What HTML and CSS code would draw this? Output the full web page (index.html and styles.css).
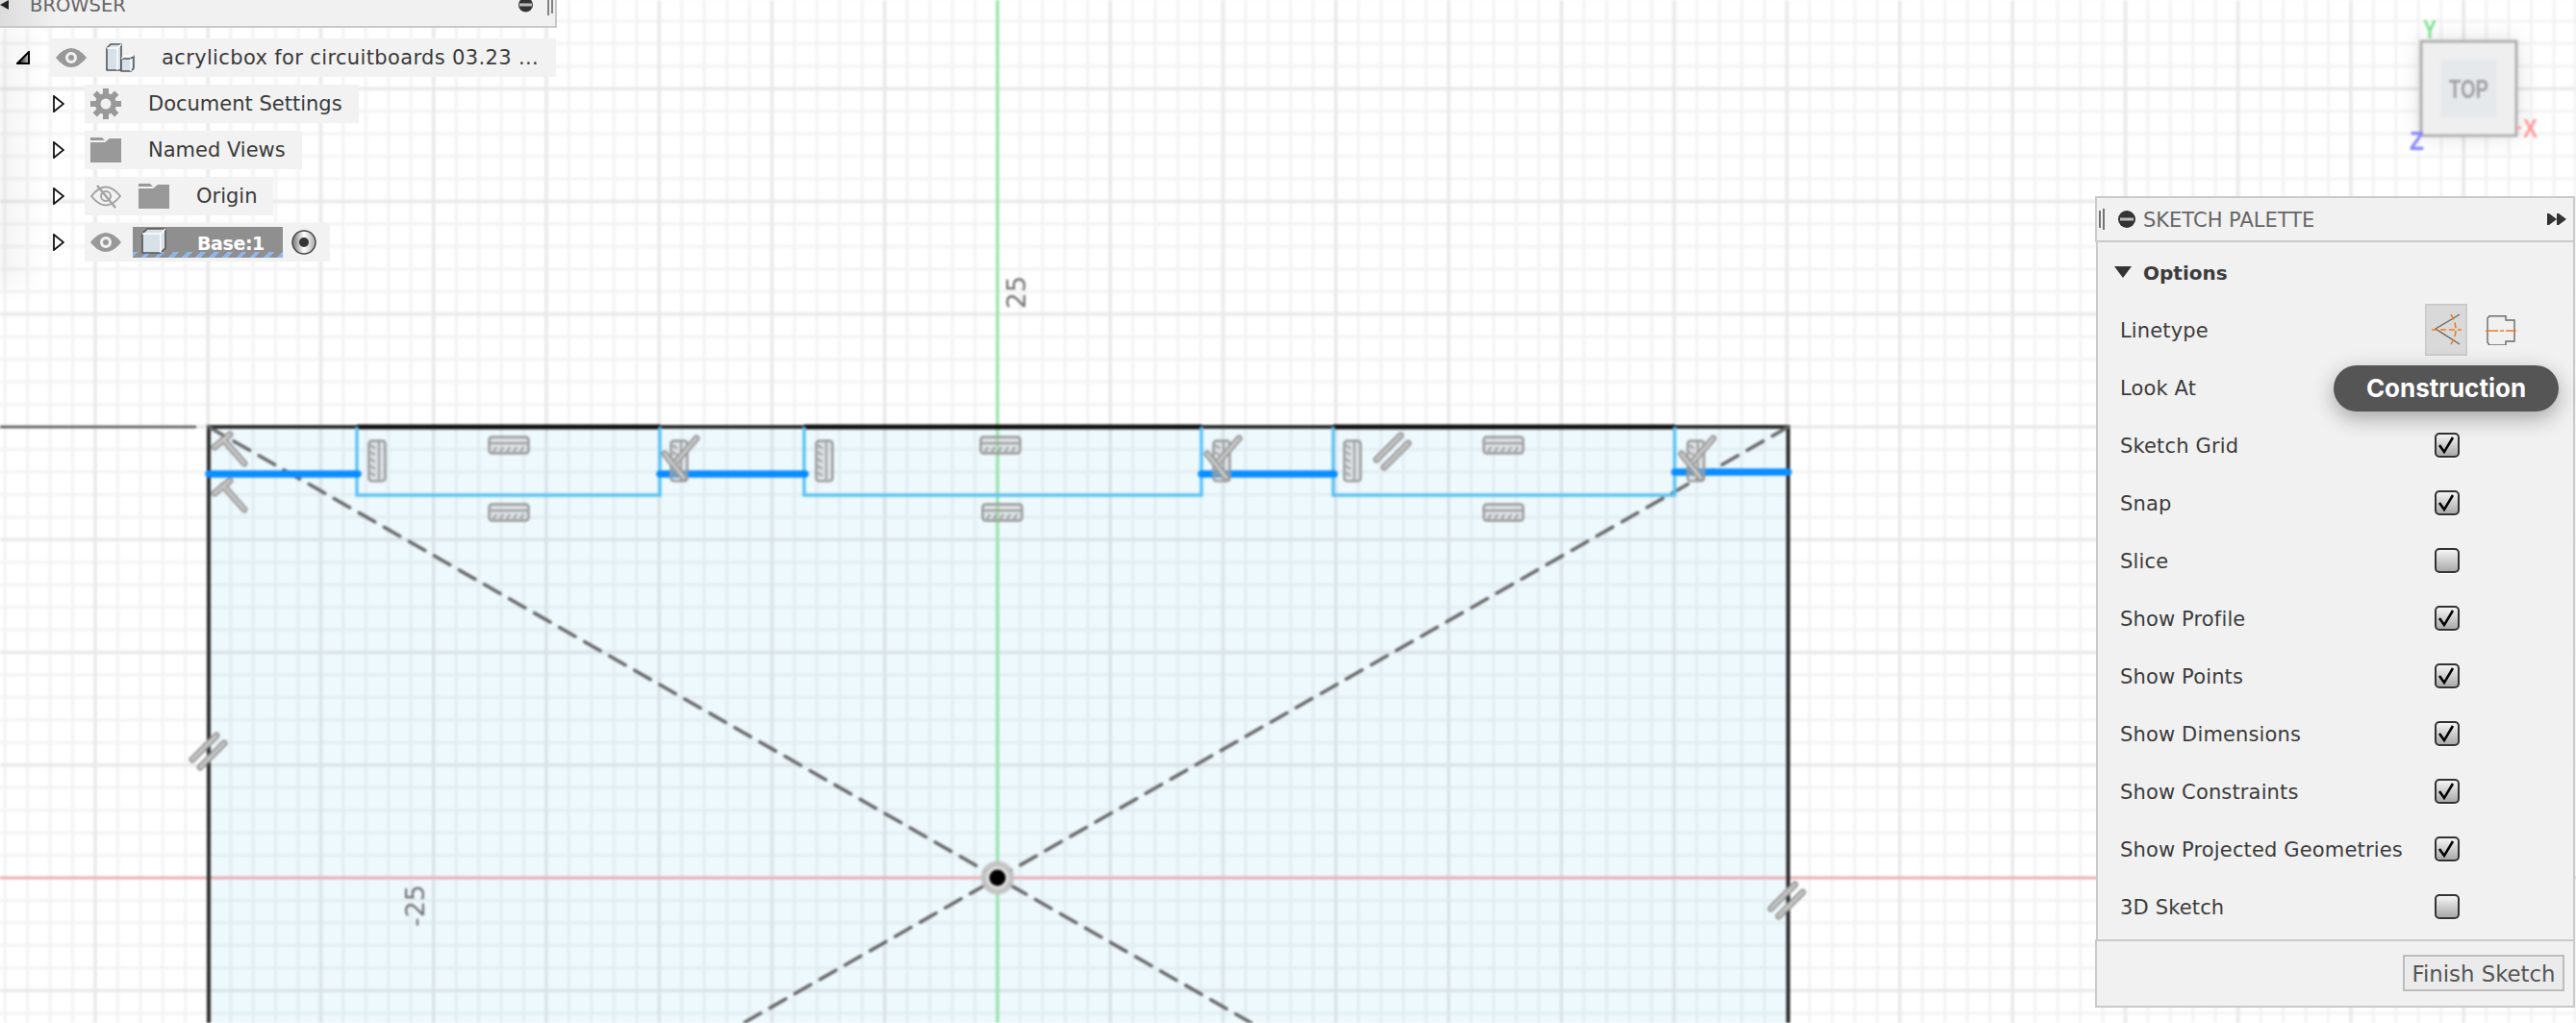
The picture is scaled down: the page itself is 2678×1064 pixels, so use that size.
FILE: index.html
```html
<!DOCTYPE html>
<html lang="en">
<head>
<meta charset="utf-8">
<title>Sketch</title>
<link rel="stylesheet" href="styles.css">
</head>
<body>
<svg class="canvas" width="2678" height="1064" viewBox="0 0 2678 1064">
  <defs>
    <pattern id="minor" patternUnits="userSpaceOnUse" x="1025.275" y="901.275" width="23.45" height="23.45">
      <path class="grid-minor" d="M11.725 0V23.45M0 11.725H23.45"/>
    </pattern>
    <pattern id="major" patternUnits="userSpaceOnUse" x="978.375" y="854.375" width="117.25" height="117.25">
      <path class="grid-major" d="M58.625 0V117.25M0 58.625H117.25"/>
    </pattern>
    <g id="hz">
      <rect class="glyph" x="1.5" y="1.5" width="41" height="17" rx="3"/>
      <path class="glyph-line" d="M2 8H42M6 17l3-5M13 17l3-5M20 17l3-5M27 17l3-5M34 17l3-5"/>
    </g>
    <g id="par">
      <path class="cap-o" d="M-17 8L8-17M-9 16L16-9"/>
      <path class="cap-i" d="M-17 8L8-17M-9 16L16-9"/>
    </g>
    <g id="perp">
      <path class="cap-o" d="M0 13L16 0M9 5L31 30"/>
      <path class="cap-i" d="M0 13L16 0M9 5L31 30"/>
    </g>
    <g id="vt"><use href="#hz" transform="translate(19 0) rotate(90) scale(1.02 1)"/></g>
    <g id="combo">
      <use href="#vt" x="8" y="4"/>
      <path class="cap-o" d="M2 19L22 44M14 27L35 3"/>
      <path class="cap-i" d="M2 19L22 44M14 27L35 3"/>
    </g>
    <radialGradient id="halo">
      <stop offset="0.5" stop-color="#e6e6e6"/>
      <stop offset="0.8" stop-color="#bcbcbc"/>
      <stop offset="1" stop-color="#c8c8c8" stop-opacity=".6"/>
    </radialGradient>
    <linearGradient id="leftfade">
      <stop offset="0" stop-color="#000" stop-opacity="0.06"/>
      <stop offset="1" stop-color="#000" stop-opacity="0"/>
    </linearGradient>
  </defs>

  <rect class="paper" width="2678" height="1064"/>
  <rect width="2678" height="1064" fill="url(#minor)"/>
  <rect width="2678" height="1064" fill="url(#major)"/>
  <rect class="left-fade" x="-20" y="28" width="70" height="270" fill="url(#leftfade)"/>
  <rect class="profile" x="217" y="444" width="1642" height="620"/>

  <line class="axis-y" x1="1037" y1="0" x2="1037" y2="1064"/>
  <line class="axis-x" x1="0" y1="913" x2="2678" y2="913"/>

  <line class="stub" x1="0" y1="444" x2="204" y2="444"/>
  <path class="edge" d="M217 1064V444H1859V1064"/>
  <path class="edge-dark" d="M371 444H686M836 444H1249M1386 444H1741"/>

  <path class="diag" d="M217 444L1301 1064"/>
  <path class="diag" d="M1859 444L773 1064"/>

  <path class="notch" d="M371 444V515H686V444"/>
  <path class="notch" d="M836 444V515H1249V444"/>
  <path class="notch" d="M1386 444V515H1741V444"/>
  <path class="slot" d="M217 493H372M686 493H837M1249 493H1387M1741 491H1859"/>

  <use href="#perp" x="223" y="452"/>
  <use href="#perp" x="223" y="500"/>
  <use href="#vt" x="383" y="457"/>
  <use href="#hz" x="507" y="453"/>
  <use href="#hz" x="507" y="523"/>
  <use href="#combo" x="689" y="453"/>
  <use href="#vt" x="848" y="457"/>
  <use href="#hz" x="1018" y="453"/>
  <use href="#hz" x="1020" y="523"/>
  <use href="#combo" x="1253" y="453"/>
  <use href="#vt" x="1397" y="457"/>
  <use href="#par" x="1448" y="470"/>
  <use href="#hz" x="1541" y="453"/>
  <use href="#hz" x="1541" y="523"/>
  <use href="#combo" x="1746" y="453"/>
  <use href="#par" x="217" y="782"/>
  <use href="#par" x="1858" y="937"/>

  <circle cx="1037" cy="913" r="18" fill="url(#halo)" class="halo"/>
  <circle class="origin" cx="1037" cy="913" r="8.5"/>

  <text class="dim" transform="translate(1066 304) rotate(-90)">25</text>
  <text class="dim" transform="translate(441 942) rotate(-90)">-25</text>

  <rect class="cube-shadow" x="2517" y="43" width="99" height="98"/>
  <rect class="cube" x="2517" y="43" width="99" height="98"/>
  <rect class="cube-face" x="2537" y="62" width="59" height="60"/>
  <text class="cube-text" x="2546" y="102" textLength="41" lengthAdjust="spacingAndGlyphs">TOP</text>
  <text class="axis-label ay" x="2519" y="40" textLength="14" lengthAdjust="spacingAndGlyphs">Y</text>
  <text class="axis-label az" x="2505" y="156" textLength="15" lengthAdjust="spacingAndGlyphs">Z</text>
  <text class="axis-label ax" x="2623" y="143" textLength="15" lengthAdjust="spacingAndGlyphs">X</text>
  <line class="axis-tick" x1="2616" y1="133" x2="2621" y2="133"/>
</svg>

<aside class="browser">
  <header class="browser-head">
    <svg class="head-arrow" width="9" height="10" viewBox="0 0 9 10"><path d="M9 0V10L0 5Z"/></svg>
    <span class="browser-title">BROWSER</span>
    <svg class="head-min" width="15" height="14" viewBox="0 0 15 14"><circle cx="7.5" cy="5" r="7.5"/><rect class="min-bar" x="1" y="3.5" width="13" height="3"/></svg>
    <svg class="head-grip" width="6" height="16" viewBox="0 0 6 16"><path d="M1 0V16M5 0V14"/></svg>
  </header>
  <div class="tree">
    <div class="tree-row">
      <svg class="twist-open" width="14" height="14" viewBox="0 0 14 14"><defs><linearGradient id="tg" x1="0" x2="1"><stop offset="0" stop-color="#000"/><stop offset="1" stop-color="#ccc"/></linearGradient></defs><path d="M13 1V13H1Z"/></svg>
      <div class="pill pill-root">
        <svg class="ic" width="32" height="20" viewBox="0 0 32 20"><path class="ic-fill" d="M0 10Q16-10 32 10Q16 30 0 10Z"/><circle class="ic-bg" cx="16" cy="10" r="6"/><circle class="ic-fill" cx="16" cy="10" r="3"/></svg>
        <svg class="ic ic-comp" width="30" height="30" viewBox="0 0 30 30"><path class="solid" d="M1 5L5 1H16V28H1Z"/><path class="solid" d="M16 16H26L29 13V26L26 29H16Z"/><path class="solid-line" d="M1 5H12L16 1M12 5V28M16 16L20 13H29M26 16V29"/></svg>
        <span class="tree-label root-label">acrylicbox for circuitboards 03.23 ...</span>
      </div>
    </div>
    <div class="tree-row">
      <svg class="twist" width="12" height="18" viewBox="0 0 12 18"><path d="M1 1L11 9L1 17Z"/></svg>
      <div class="pill">
        <svg class="ic" width="32" height="32" viewBox="0 0 32 32"><path class="gear-teeth" d="M16 0V32M0 16H32M4.7 4.7L27.3 27.3M27.3 4.7L4.7 27.3"/><circle class="ic-fill" cx="16" cy="16" r="11"/><circle class="ic-bg" cx="16" cy="16" r="5.5"/></svg>
        <span class="tree-label">Document Settings</span>
      </div>
    </div>
    <div class="tree-row">
      <svg class="twist" width="12" height="18" viewBox="0 0 12 18"><path d="M1 1L11 9L1 17Z"/></svg>
      <div class="pill">
        <svg class="ic" width="32" height="26" viewBox="0 0 32 26"><path class="ic-fill" d="M0 0H12L15 3H0ZM0 5H15L20 1H32V26H0Z"/></svg>
        <span class="tree-label">Named Views</span>
      </div>
    </div>
    <div class="tree-row">
      <svg class="twist" width="12" height="18" viewBox="0 0 12 18"><path d="M1 1L11 9L1 17Z"/></svg>
      <div class="pill pill-vis">
        <svg class="ic" width="32" height="26" viewBox="0 0 32 26"><path class="ic-line" d="M1 13Q16-6 31 13Q16 32 1 13Z"/><circle class="ic-line" cx="16" cy="13" r="5"/><path class="ic-slash" d="M7 2L26 25"/></svg>
        <svg class="ic" width="32" height="26" viewBox="0 0 32 26"><path class="ic-fill" d="M0 0H12L15 3H0ZM0 5H15L20 1H32V26H0Z"/></svg>
        <span class="tree-label">Origin</span>
      </div>
    </div>
    <div class="tree-row">
      <svg class="twist" width="12" height="18" viewBox="0 0 12 18"><path d="M1 1L11 9L1 17Z"/></svg>
      <div class="pill pill-vis pill-base">
        <svg class="ic" width="32" height="20" viewBox="0 0 32 20"><path class="ic-fill" d="M0 10Q16-10 32 10Q16 30 0 10Z"/><circle class="ic-bg" cx="16" cy="10" r="6"/><circle class="ic-fill" cx="16" cy="10" r="3"/></svg>
        <div class="base-tag">
          <svg class="ic" width="26" height="27" viewBox="0 0 26 27"><path class="solid" d="M1 6L6 1H25V21L20 26H1Z"/><path class="solid-line" d="M1 6H20L25 1M20 6V26"/></svg>
          <span class="base-label">Base:1</span>
        </div>
        <svg class="ic" width="26" height="26" viewBox="0 0 26 26"><defs><linearGradient id="rg" x1="0" x2="1"><stop offset="0" stop-color="#777"/><stop offset=".5" stop-color="#fff"/><stop offset="1" stop-color="#aaa"/></linearGradient></defs><circle class="radio" cx="13" cy="13" r="12"/><circle class="radio-dot" cx="13" cy="13" r="5"/></svg>
      </div>
    </div>
  </div>
</aside>

<aside class="palette">
  <header class="pal-head">
    <svg width="6" height="22" viewBox="0 0 6 22"><path class="grip" d="M1 2V20M5 0V22"/></svg>
    <svg width="18" height="18" viewBox="0 0 18 18"><circle class="min-dot" cx="9" cy="9" r="9"/><rect class="min-bar" x="2" y="7.5" width="14" height="3"/></svg>
    <span class="pal-title">SKETCH PALETTE</span>
    <svg class="pal-more" width="20" height="12" viewBox="0 0 20 12"><path class="more" d="M0 0H2V12H0ZM2 0L10 6L2 12ZM10 0H12V12H10ZM12 0L20 6L12 12Z"/></svg>
  </header>
  <div class="pal-body">
    <div class="opt-head">
      <svg width="18" height="12" viewBox="0 0 18 12"><path class="more" d="M0 0H18L9 12Z"/></svg>
      <span>Options</span>
    </div>
    <div class="opt-row">
      <span>Linetype</span>
      <div class="linetype">
        <div class="lt-btn">
          <svg width="44" height="54" viewBox="0 0 44 54"><path class="lt-grey" d="M36 11L11 26L36 42"/><path class="lt-orange" d="M7 27H38"/><path class="lt-orange" d="M27 11Q37 27 27 42"/></svg>
        </div>
        <svg width="33" height="31" viewBox="0 0 33 31"><path class="lt-grey" d="M5 .7H22V5H31V27H22V31H5L3 28V3Z"/><path class="lt-dot" d="M1 16H33"/></svg>
      </div>
    </div>
    <div class="opt-row"><span>Look At</span></div>
    <div class="opt-row"><span>Sketch Grid</span><span class="chk"><svg width="22" height="22" viewBox="0 0 22 22"><path d="M3 11L8 18L17 3"/></svg></span></div>
    <div class="opt-row"><span>Snap</span><span class="chk"><svg width="22" height="22" viewBox="0 0 22 22"><path d="M3 11L8 18L17 3"/></svg></span></div>
    <div class="opt-row"><span>Slice</span><span class="chk"></span></div>
    <div class="opt-row"><span>Show Profile</span><span class="chk"><svg width="22" height="22" viewBox="0 0 22 22"><path d="M3 11L8 18L17 3"/></svg></span></div>
    <div class="opt-row"><span>Show Points</span><span class="chk"><svg width="22" height="22" viewBox="0 0 22 22"><path d="M3 11L8 18L17 3"/></svg></span></div>
    <div class="opt-row"><span>Show Dimensions</span><span class="chk"><svg width="22" height="22" viewBox="0 0 22 22"><path d="M3 11L8 18L17 3"/></svg></span></div>
    <div class="opt-row"><span>Show Constraints</span><span class="chk"><svg width="22" height="22" viewBox="0 0 22 22"><path d="M3 11L8 18L17 3"/></svg></span></div>
    <div class="opt-row"><span>Show Projected Geometries</span><span class="chk"><svg width="22" height="22" viewBox="0 0 22 22"><path d="M3 11L8 18L17 3"/></svg></span></div>
    <div class="opt-row"><span>3D Sketch</span><span class="chk"></span></div>
  </div>
  <footer class="pal-foot"><button class="finish" type="button">Finish Sketch</button></footer>
  <div class="tooltip">Construction</div>
</aside>
</body>
</html>
```
FILE: styles.css
```css
html, body {
  margin: 0;
  padding: 0;
  width: 2678px;
  height: 1064px;
  overflow: hidden;
  background: #fff;
  font-family: "DejaVu Sans", "Open Sans", sans-serif;
  color: #3a3a3a;
}

/* ---------- canvas ---------- */
.canvas {
  position: absolute;
  inset: 0;
  display: block;
  filter: blur(0.9px);
}
.paper { fill: #fff; }
.grid-minor { stroke: #f3f3f3; stroke-width: 3; fill: none; }
.grid-major { stroke: #e8e8e8; stroke-width: 3; fill: none; }
.left-fade { filter: blur(10px); }
.profile { fill: #eef9fe; mix-blend-mode: multiply; }
.axis-y { stroke: #8fe6a0; stroke-width: 3; }
.axis-x { stroke: #f4a3a9; stroke-width: 2.5; }
.stub { stroke: #555; stroke-width: 2.5; }
.edge { stroke: #2c2c2c; stroke-width: 4; fill: none; }
.edge-dark { stroke: #0d0d0d; stroke-width: 5; fill: none; }
.diag { stroke: #666; stroke-width: 3.5; fill: none; stroke-dasharray: 19 11; stroke-linecap: round; }
.notch { stroke: #58c3f5; stroke-width: 3.4; fill: none; }
.slot { stroke: #0a8dff; stroke-width: 7.5; fill: none; stroke-linecap: round; }
.glyph { fill: rgba(190, 190, 190, .4); stroke: #999; stroke-width: 2.4; }
.glyph-line { stroke: #999; stroke-width: 1.8; fill: none; }
.cap-o { stroke: #9a9a9a; stroke-width: 7; stroke-linecap: round; fill: none; }
.cap-i { stroke: #c9c9c9; stroke-width: 3; stroke-linecap: round; fill: none; }
.origin { fill: #000; }
.dim { font-family: "DejaVu Sans", sans-serif; font-size: 27px; fill: #707070; text-anchor: middle; }
.cube-shadow { fill: #000; opacity: .14; filter: blur(12px); }
.cube { fill: #efefef; stroke: #b0b0b0; stroke-width: 3; }
.cube-face { fill: #e6e9eb; }
.cube-text { font-family: "Liberation Sans", sans-serif; font-weight: 700; font-size: 27px; fill: #a0a2a4; }
.axis-label { font-family: "Liberation Sans", sans-serif; font-weight: 700; font-size: 28px; }
.ay { fill: #7fe391; }
.az { fill: #8585ff; }
.ax { fill: #ff9c9c; }
.axis-tick { stroke: #ff9c9c; stroke-width: 3; }

/* ---------- browser ---------- */
.browser {
  position: absolute;
  top: 0;
  left: 0;
  width: 579px;
  font-size: 21px;
}
.browser-head {
  box-sizing: border-box;
  height: 29px;
  display: flex;
  align-items: flex-start;
  position: relative;
  overflow: hidden;
  background: linear-gradient(90deg, #dcdcdc, #f1f1f1 60px);
  border-right: 2px solid #c9c9c9;
  border-bottom: 2px solid #c9c9c9;
}
.head-arrow path { fill: #222; }
.browser-title {
  margin: -8px 0 0 22px;
  font-size: 19.5px;
  line-height: 28px;
  color: #666;
}
.head-min { margin-left: auto; margin-right: 15px; }
.head-min circle { fill: #333; }
.min-bar { fill: #bdbdbd; }
.head-grip { margin-right: 2px; }
.head-grip path { stroke: #666; stroke-width: 1.6; fill: none; }

.tree {
  display: flex;
  flex-direction: column;
  gap: 8px;
  margin-top: 11px;
}
.tree-row {
  height: 40px;
  display: flex;
  align-items: center;
}
.twist-open { margin: 0 21px 0 17px; flex: none; }
.twist-open path { fill: url(#tg); stroke: #000; stroke-width: 2; }
.twist { margin: 0 21px 0 55px; flex: none; }
.twist path { fill: #fff; stroke: #111; stroke-width: 1.8; }
.pill {
  height: 40px;
  display: flex;
  align-items: center;
  padding: 0 17px 0 6px;
  background: rgba(241, 241, 241, .96);
}
.pill-root { width: 526px; box-sizing: border-box; padding-right: 0; }
.pill-root .ic-comp { margin-left: 20px; }
.pill-root .root-label { margin-left: 28px; letter-spacing: .36px; }
.ic { display: block; flex: none; }
.ic-fill { fill: #999; }
.ic-bg { fill: #f1f1f1; }
.ic-line { fill: none; stroke: #a3a3a3; stroke-width: 2; }
.ic-slash { stroke: #a3a3a3; stroke-width: 2.4; fill: none; }
.gear-teeth { stroke: #999; stroke-width: 6; fill: none; }
.solid { fill: #d7e1ea; stroke: #555; stroke-width: 1.6; stroke-linejoin: round; }
.solid-line { fill: none; stroke: #fff; stroke-width: 1.4; }
.tree-label { margin-left: 28px; white-space: nowrap; }
.pill-vis .ic + .ic { margin-left: 18px; }
.pill-vis .tree-label { margin-left: 28px; }
.pill-base { padding-right: 14px; }
.base-tag {
  height: 32px;
  width: 156px;
  margin: 0 9px 0 12px;
  display: flex;
  align-items: flex-start;
  padding-left: 9px;
  box-sizing: border-box;
  background:
    repeating-linear-gradient(135deg, #8fb6ec 0 4px, transparent 4px 10px) left bottom / 100% 6px no-repeat,
    #8f8f8f;
}
.base-tag .ic { margin-top: 1px; }
.base-label {
  margin-left: 32px;
  color: #fff;
  font-weight: 700;
  font-size: 19px;
  letter-spacing: -.4px;
  line-height: 34px;
}
.radio { fill: url(#rg); stroke: #444; stroke-width: 1.5; }
.radio-dot { fill: #333; }

/* ---------- palette ---------- */
.palette {
  position: absolute;
  top: 204px;
  left: 2178px;
  width: 499px;
  font-size: 21px;
  color: #3c3c3c;
}
.pal-head {
  box-sizing: border-box;
  height: 48px;
  display: flex;
  align-items: center;
  padding: 0 7px 0 2px;
  background: #f1f1f1;
  border: 2px solid #cacaca;
}
.grip { stroke: #555; stroke-width: 1.6; fill: none; }
.min-dot { fill: #333; }
.pal-head svg:nth-child(2) { margin-left: 14px; }
.pal-title { margin-left: 8px; color: #666; font-size: 21px; line-height: 28px; padding-top: 2px; }
.pal-more { margin-left: auto; }
.more { fill: #333; }
.pal-body {
  box-sizing: border-box;
  height: 725px;
  padding: 1px 0 4px 23px;
  margin-left: 1px;
  background: #f1f1f1;
  border-left: 2px solid #cacaca;
  border-right: 2px solid #cacaca;
}
.opt-head {
  height: 60px;
  display: flex;
  align-items: center;
  gap: 12px;
  margin-left: -6px;
  font-weight: 700;
  font-size: 20px;
}
.opt-head span { padding-top: 2px; }
.opt-row {
  height: 60px;
  display: grid;
  grid-template-columns: 317px auto;
  align-items: center;
  letter-spacing: .15px;
}
.opt-row > span:first-child { padding-top: 2px; }
.linetype {
  display: flex;
  align-items: center;
  gap: 18px;
}
.lt-btn {
  box-sizing: border-box;
  width: 44px;
  height: 54px;
  background: #d9d9d9;
  box-shadow: inset 0 0 0 1.5px #c8c8c8;
}
.lt-btn svg { display: block; }
.lt-grey { fill: none; stroke: #6a6a6a; stroke-width: 1.4; }
.lt-orange { fill: none; stroke: #f47a20; stroke-width: 1.6; stroke-dasharray: 6 3; }
.lt-dot { fill: none; stroke: #f47a20; stroke-width: 1.4; stroke-dasharray: 13 2 4 2; }
.chk {
  box-sizing: border-box;
  width: 26px;
  height: 26px;
  margin-left: 10px;
  border: 2px solid #333;
  border-radius: 5px;
  background: linear-gradient(#f5f5f5, #a9a9a9);
  box-shadow: 0 1px 0 #fff;
}
.chk svg { display: block; }
.chk path { fill: none; stroke: #000; stroke-width: 2.6; }
.pal-foot {
  box-sizing: border-box;
  height: 71px;
  display: flex;
  align-items: center;
  justify-content: flex-end;
  padding: 0 9px 1px 0;
  background: #f1f1f1;
  border: 2px solid #cacaca;
}
.finish {
  box-sizing: border-box;
  width: 168px;
  height: 38px;
  padding: 2px 0 0;
  background: #ebebeb;
  border: 2px solid #bcbcbc;
  border-radius: 0;
  color: #555;
  font-family: inherit;
  font-size: 22.8px;
  line-height: 32px;
}
.tooltip {
  position: absolute;
  top: 176px;
  left: 248px;
  width: 234px;
  height: 48px;
  border-radius: 24px;
  background: #555;
  box-shadow: 0 7px 22px rgba(0, 0, 0, .32);
  color: #fff;
  font-family: Inter, "Liberation Sans", sans-serif;
  font-weight: 700;
  font-size: 26px;
  line-height: 48px;
  text-align: center;
}
```
